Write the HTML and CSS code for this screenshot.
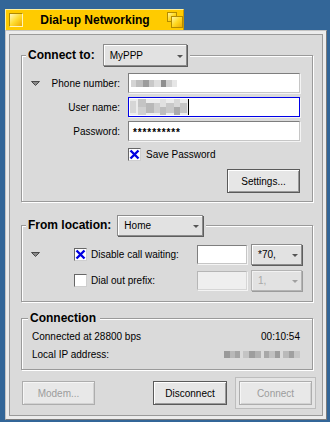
FILE: index.html
```html
<!DOCTYPE html>
<html>
<head>
<meta charset="utf-8">
<title>Dial-up Networking</title>
<link rel="stylesheet" href="styles.css">
</head>
<body>
<div class="desktop">
  <div class="tab">
    <span class="close-box"></span>
    <span class="title">Dial-up Networking</span>
    <svg class="zoom-box" width="16" height="16" viewBox="0 0 16 16">
      <defs>
        <linearGradient id="zg" x1="0" y1="0" x2="1" y2="1">
          <stop offset="0" stop-color="#fff7b0"/>
          <stop offset="0.5" stop-color="#ffd820"/>
          <stop offset="1" stop-color="#eca800"/>
        </linearGradient>
      </defs>
      <rect x="0.5" y="0.5" width="9" height="9" fill="url(#zg)" stroke="#b48c00"/>
      <rect x="4.5" y="4.5" width="11" height="11" fill="url(#zg)" stroke="#b48c00"/>
    </svg>
  </div>
  <div class="window">
    <div class="content">

      <section class="group g-connect">
        <div class="legend">
          <span class="legend-label">Connect to:</span>
          <div class="menu w-myppp"><span class="menu-text">MyPPP</span><span class="arrow"></span></div>
        </div>
        <div class="rows">
          <div class="row">
            <svg class="disc" width="9" height="5" viewBox="0 0 9 5"><polygon points="0.5,0.5 8.5,0.5 4.5,4.5" fill="#8a8a8a" stroke="#4a4a4a" stroke-width="1"/></svg>
            <label>Phone number:</label>
            <div class="field">
              <svg class="blur" width="46" height="7" viewBox="0 0 46 7">
                <rect x="0" y="0" width="5" height="7" fill="#d4d4d4"/>
                <rect x="5" y="0" width="7" height="7" fill="#bdbdbd"/>
                <rect x="12" y="0" width="6" height="7" fill="#9c9c9c"/>
                <rect x="18" y="0" width="5" height="7" fill="#c8c8c8"/>
                <rect x="23" y="0" width="7" height="7" fill="#dedede"/>
                <rect x="30" y="0" width="5" height="7" fill="#8e8e8e"/>
                <rect x="35" y="0" width="6" height="7" fill="#cfcfcf"/>
                <rect x="41" y="0" width="5" height="7" fill="#e6e6e6"/>
              </svg>
            </div>
          </div>
          <div class="row">
            <span class="disc-slot"></span>
            <label>User name:</label>
            <div class="field focus">
              <svg class="blur-user" width="58" height="16" viewBox="0 0 58 16">
                <rect x="0" y="0" width="58" height="16" fill="#ececec"/>
                <rect x="0" y="2" width="6" height="12" fill="#d6d6d6"/>
                <rect x="8" y="0" width="8" height="8" fill="#c4c4c4"/>
                <rect x="8" y="8" width="8" height="8" fill="#d0d0d0"/>
                <rect x="16" y="4" width="8" height="10" fill="#b8b8b8"/>
                <rect x="24" y="4" width="6" height="10" fill="#cfcfcf"/>
                <rect x="30" y="0" width="6" height="8" fill="#e0e0e0"/>
                <rect x="30" y="8" width="6" height="8" fill="#bdbdbd"/>
                <rect x="36" y="4" width="8" height="10" fill="#c8c8c8"/>
                <rect x="44" y="0" width="6" height="8" fill="#d8d8d8"/>
                <rect x="44" y="8" width="6" height="8" fill="#ababab"/>
                <rect x="50" y="4" width="7" height="10" fill="#c6c6c6"/>
              </svg>
              <span class="caret"></span>
            </div>
          </div>
          <div class="row">
            <span class="disc-slot"></span>
            <label>Password:</label>
            <div class="field"><span class="pw">**********</span></div>
          </div>
        </div>
        <div class="save-row"><span class="check checked"><svg width="11" height="11" viewBox="0 0 11 11"><path d="M1.5 1.5 L9.5 9.5 M9.5 1.5 L1.5 9.5" stroke="#0000e0" stroke-width="2.4"/></svg></span><span>Save Password</span></div>
        <div class="settings-row"><button class="btn w73">Settings...</button></div>
      </section>

      <section class="group g-location">
        <div class="legend loc-legend">
          <span class="legend-label">From location:</span>
          <div class="menu w-home"><span class="menu-text">Home</span><span class="arrow"></span></div>
        </div>
        <div class="loc-rows">
          <div class="loc-row">
            <svg class="disc" width="9" height="5" viewBox="0 0 9 5"><polygon points="0.5,0.5 8.5,0.5 4.5,4.5" fill="#8a8a8a" stroke="#4a4a4a" stroke-width="1"/></svg>
            <span class="check checked"><svg width="11" height="11" viewBox="0 0 11 11"><path d="M1.5 1.5 L9.5 9.5 M9.5 1.5 L1.5 9.5" stroke="#0000e0" stroke-width="2.4"/></svg></span>
            <span class="loc-label">Disable call waiting:</span>
            <div class="field small"></div>
            <div class="menu small-menu"><span class="menu-text">*70,</span><span class="arrow"></span></div>
          </div>
          <div class="loc-row">
            <span class="disc-slot"></span>
            <span class="check"></span>
            <span class="loc-label">Dial out prefix:</span>
            <div class="field small disabled"></div>
            <div class="menu small-menu disabled"><span class="menu-text">1,</span><span class="arrow"></span></div>
          </div>
        </div>
      </section>

      <section class="group g-conn">
        <div class="legend plain"><span class="legend-label">Connection</span></div>
        <div class="conn-lines">
          <div class="conn-line"><span>Connected at 28800 bps</span><span>00:10:54</span></div>
          <div class="conn-line"><span>Local IP address:</span>
            <svg class="ip" width="76" height="7" viewBox="0 0 76 7">
              <rect x="0" y="0" width="6" height="7" fill="#9a9a9a"/>
              <rect x="6" y="0" width="5" height="7" fill="#b8b8b8"/>
              <rect x="11" y="0" width="5" height="7" fill="#a4a4a4"/>
              <rect x="19" y="0" width="6" height="7" fill="#c4c4c4"/>
              <rect x="25" y="0" width="6" height="7" fill="#9e9e9e"/>
              <rect x="31" y="0" width="6" height="7" fill="#b2b2b2"/>
              <rect x="40" y="0" width="5" height="7" fill="#a8a8a8"/>
              <rect x="45" y="0" width="6" height="7" fill="#c0c0c0"/>
              <rect x="51" y="0" width="5" height="7" fill="#9c9c9c"/>
              <rect x="59" y="0" width="6" height="7" fill="#bababa"/>
              <rect x="65" y="0" width="5" height="7" fill="#a0a0a0"/>
              <rect x="70" y="0" width="6" height="7" fill="#c6c6c6"/>
            </svg>
          </div>
        </div>
      </section>

      <div class="button-row">
        <button class="btn w73 disabled">Modem...</button>
        <button class="btn w74 push">Disconnect</button>
        <div class="default-frame"><button class="btn w73 disabled">Connect</button></div>
      </div>

    </div>
  </div>
</div>
</body>
</html>
```

FILE: styles.css
```css
* { box-sizing: border-box; }
html, body { margin: 0; padding: 0; }
body {
  background: #336698;
  width: 330px;
  height: 422px;
  overflow: hidden;
  font-family: "Liberation Sans", Arial, sans-serif;
  font-size: 10px;
  color: #000;
}
.desktop { padding: 9px 0 0 5px; }

/* window tab */
.tab {
  width: 179px;
  height: 21px;
  background: #ffcb00;
  border-style: solid;
  border-width: 1px 1px 0 1px;
  border-color: #fff0a0 #c89800 transparent #fff0a0;
  display: flex;
  align-items: center;
}
.close-box {
  width: 14px;
  height: 14px;
  margin-left: 3px;
  border: 1px solid;
  border-color: #b08a00 #fff4b8 #fff4b8 #b08a00;
  background: linear-gradient(135deg, #fff8c0 0%, #ffdc30 50%, #eca800 100%);
}
.title {
  flex: 1;
  text-align: center;
  font-weight: bold;
  font-size: 12px;
  line-height: 14px;
}
.zoom-box { display: block; }

/* window body */
.window {
  width: 322px;
  height: 390px;
  border: 1px solid;
  border-color: #c4c4c4 #7c7c7c #7c7c7c #c4c4c4;
  background: #ececec;
  padding: 3px;
}
.content {
  height: 100%;
  border: 1px solid #9a9a9a;
  background: #dadada;
}

/* group boxes */
.group {
  width: 292px;
  margin-left: 11px;
  border: 1px solid #9a9a9a;
  box-shadow: inset 1px 1px 0 #fff, 1px 1px 0 #fff;
}
.g-connect { margin-top: 20px; }
.g-location { margin-top: 23px; }
.g-conn { margin-top: 16px; }

.legend {
  display: flex;
  width: max-content;
  align-items: center;
  gap: 8px;
  height: 22px;
  margin: -12px 0 0 4px;
  padding: 0 3px 0 2px;
  background: #dadada;
}
.legend.loc-legend { gap: 6px; }
.legend-label { font-weight: bold; font-size: 12px; line-height: 14px; }
.legend.plain {
  height: 14px;
  margin: -8px 0 0 6px;
  padding: 0 4px 0 2px;
}

/* menu fields */
.menu {
  height: 22px;
  display: flex;
  align-items: center;
  background: #e2e2e2;
  border: 1px solid #8c8c8c;
  box-shadow: inset 1px 1px 0 #fff, 1px 1px 0 #5e5e5e;
  padding-left: 6px;
}
.menu-text { flex: 1; }
.arrow {
  align-self: flex-end;
  width: 0;
  height: 0;
  margin: 0 3px 7px 0;
  border-left: 3px solid transparent;
  border-right: 3px solid transparent;
  border-top: 3px solid #555;
}
.w-myppp { width: 84px; }
.w-home { width: 86px; height: 21px; }
.menu.small-menu { width: 51px; height: 21px; margin-left: 4px; padding-left: 6px; }
.menu.disabled { color: #a8a8a8; border-color: #b4b4b4; box-shadow: inset 1px 1px 0 #f2f2f2, 1px 1px 0 #9c9c9c; }
.menu.disabled .arrow { border-top-color: #a0a0a0; }

/* connect rows */
.rows {
  padding: 7px 12px 0 9px;
  display: flex;
  flex-direction: column;
  gap: 4px;
}
.row { display: flex; align-items: center; height: 20px; }
.disc { display: block; flex: none; }
.disc-slot { width: 9px; flex: none; }
.row label { flex: 1; text-align: right; margin-right: 8px; }
.field {
  width: 172px;
  height: 20px;
  background: #fff;
  border: 1px solid;
  border-color: #7e7e7e #c6c6c6 #c6c6c6 #7e7e7e;
  box-shadow: 1px 1px 0 #f4f4f4;
  display: flex;
  align-items: center;
  padding-left: 1px;
}
.field.focus { border-color: #0000e8; }
.blur { display: block; margin-left: 1px; }
.blur-user { display: block; }
.caret { width: 1px; height: 16px; background: #000; }
.pw { padding-left: 3px; letter-spacing: 0.9px; font-size: 10px; font-weight: bold; padding-top: 3px; }

.save-row {
  display: flex;
  align-items: center;
  margin-top: 7px;
  padding-left: 106px;
  height: 13px;
}
.check {
  width: 13px;
  height: 13px;
  flex: none;
  background: #fff;
  border: 1px solid;
  border-color: #666 #cfcfcf #cfcfcf #666;
  display: flex;
  align-items: center;
  justify-content: center;
}
.check svg { display: block; }
.save-row .check { margin-right: 5px; }

.settings-row {
  display: flex;
  justify-content: flex-end;
  padding: 8px 12px 8px 0;
}

/* buttons */
.btn {
  height: 24px;
  padding: 0;
  font-family: "Liberation Sans", Arial, sans-serif;
  font-size: 10px;
  color: #000;
  background: #e6e6e6;
  border: 1px solid #5a5a5a;
  box-shadow: inset 1px 1px 0 #fff, inset -1px -1px 0 #9a9a9a;
}
.btn.disabled {
  color: #9c9c9c;
  border-color: #adadad;
  box-shadow: inset 1px 1px 0 #f6f6f6, inset -1px -1px 0 #d2d2d2;
  background: #e8e8e8;
}
.w73 { width: 73px; }
.w74 { width: 74px; }

/* location rows */
.loc-rows {
  padding: 8px 10px 11px 9px;
  display: flex;
  flex-direction: column;
  gap: 6px;
}
.loc-row { display: flex; align-items: center; height: 20px; }
.loc-row .disc, .loc-row .disc-slot { width: 9px; margin-right: 34px; }
.loc-label { flex: 1; margin-left: 4px; }
.field.small { width: 50px; height: 19px; }
.field.disabled { background: #efefef; border-color: #b6b6b6 #d6d6d6 #d6d6d6 #b6b6b6; }

/* connection */
.conn-lines { padding: 2px 12px 6px 10px; }
.conn-line {
  display: flex;
  justify-content: space-between;
  align-items: center;
  height: 18px;
}
.ip { display: block; }

/* bottom buttons */
.button-row {
  display: flex;
  align-items: center;
  margin-top: 7px;
  padding: 0 6px 0 12px;
  height: 32px;
}
.push { margin-left: auto; }
.default-frame {
  margin-left: 8px;
  width: 81px;
  height: 32px;
  padding: 3px;
  border: 1px solid #bdbdbd;
  background: #e4e4e4;
}
```
